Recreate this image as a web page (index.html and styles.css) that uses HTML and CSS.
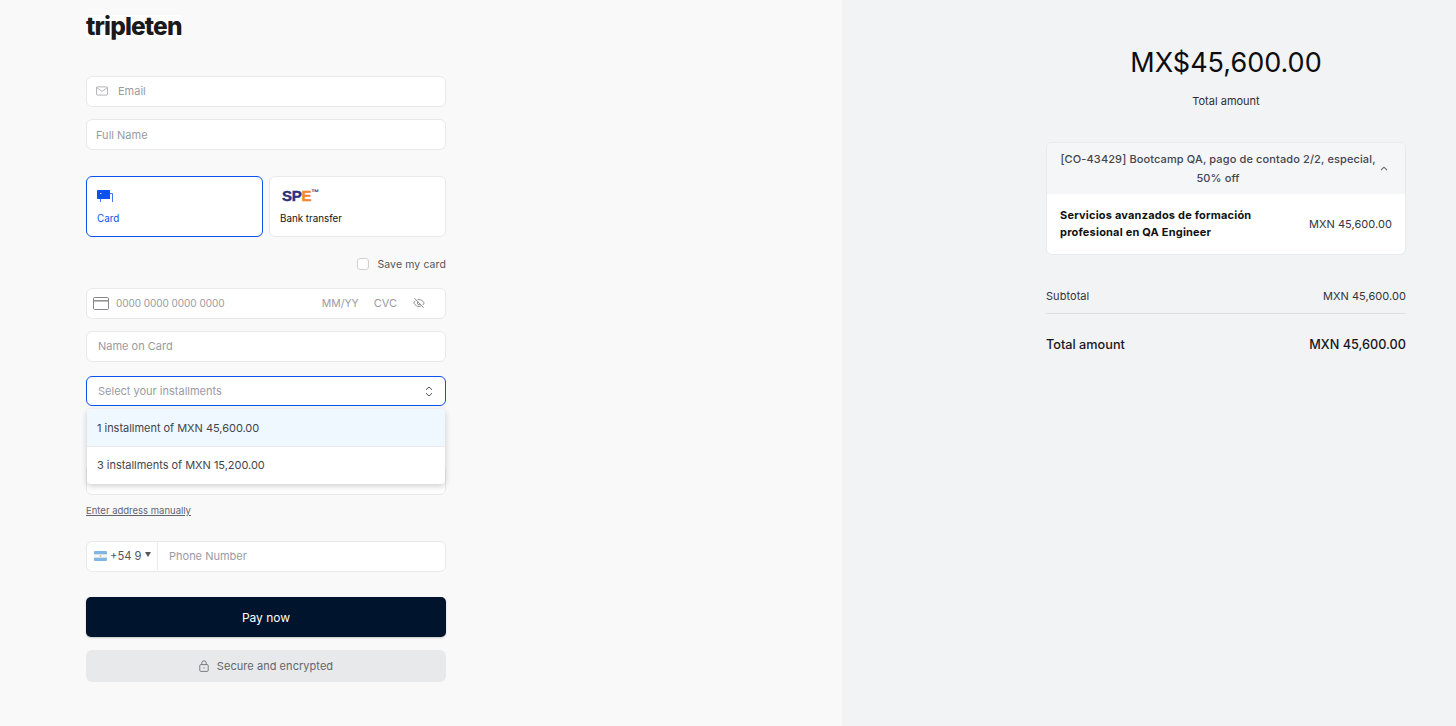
FILE: index.html
```html
<!DOCTYPE html>
<html lang="en">
<head>
    <meta charset="UTF-8">
    <meta name="viewport" content="width=device-width, initial-scale=1.0">
    <title>Checkout</title>
    <link rel="stylesheet" href="styles.css">
</head>
<body>

<div class="page">
    <!-- Payment form -->
    <main class="checkout">
        <div class="logo">tripleten</div>

        <div class="field field-email">
            <svg class="mail-icon" width="12" height="10" viewBox="0 0 12 10" fill="none" stroke="#a3a3aa" stroke-width="0.8">
                <rect x="0.5" y="0.9" width="11" height="8.2" rx="0.8"/>
                <path d="M0.7 1.6 L6 5.4 L11.3 1.6"/>
            </svg>
            <span class="placeholder">Email</span>
        </div>
        <div class="field field-name">
            <span class="placeholder">Full Name</span>
        </div>

        <div class="methods">
            <div class="method method-active">
                <svg class="method-icon" width="18" height="14" viewBox="0 0 18 14" fill="none">
                    <path d="M0 2 a1 1 0 0 1 1 -1 h12 v9 H1 a1 1 0 0 1 -1 -1 z" fill="#0b52ee"/>
                    <path d="M3.5 10 v3 M13 4.5 h2.5 v8.5" stroke="#3f78f2" stroke-width="1"/>
                    <rect x="3" y="4" width="1.4" height="1" fill="#cfe0ff"/>
                </svg>
                <span class="method-label">Card</span>
            </div>
            <div class="method">
                <div class="spei"><span class="spei-navy">SP</span><span class="spei-orange">E</span><span class="spei-mark">™</span></div>
                <span class="method-label">Bank transfer</span>
            </div>
        </div>

        <label class="save-card">
            <span class="checkbox"></span>
            <span>Save my card</span>
        </label>

        <div class="field field-card">
            <svg class="card-icon" width="16" height="13" viewBox="0 0 16 13" fill="none" stroke="#85858c" stroke-width="1">
                <rect x="0.5" y="0.5" width="15" height="12" rx="1.2"/>
                <path d="M0.5 3.8 H15.5" stroke-width="1.4"/>
            </svg>
            <span class="placeholder card-number">0000 0000 0000 0000</span>
            <span class="placeholder card-exp">MM/YY</span>
            <span class="placeholder card-cvc">CVC</span>
            <svg class="eye-icon" width="12" height="12" viewBox="0 0 12 12" fill="none" stroke="#85858c" stroke-width="0.9">
                <path d="M2.6 3.6 C1.9 4.2 1.3 5 0.8 6 C2.2 8.4 4 9.4 6 9.4 C6.9 9.4 7.7 9.2 8.5 8.8 M4.4 2.8 C4.9 2.7 5.4 2.6 6 2.6 C8 2.6 9.8 3.6 11.2 6 C10.8 6.8 10.3 7.4 9.8 8"/>
                <path d="M4.8 4.8 A1.7 1.7 0 0 0 7.2 7.2"/>
                <path d="M1.4 1.2 L10.8 10.8"/>
            </svg>
        </div>
        <div class="field field-cardname">
            <span class="placeholder">Name on Card</span>
        </div>

        <div class="select-wrap">
            <div class="field field-select">
                <span class="placeholder">Select your installments</span>
                <svg width="8" height="11" viewBox="0 0 8 11" fill="none" stroke="#55555c" stroke-width="1">
                    <path d="M1 3.8 L4 1 L7 3.8 M1 7.2 L4 10 L7 7.2"/>
                </svg>
            </div>
            <ul class="dropdown">
                <li class="option option-active">1 installment of MXN 45,600.00</li>
                <li class="option">3 installments of MXN 15,200.00</li>
            </ul>
        </div>

        <div class="field field-address"></div>
        <a class="manual-link" href="#">Enter address manually</a>

        <div class="field field-phone">
            <div class="dial">
                <svg class="flag" width="13" height="10" viewBox="0 0 13 10">
                    <rect width="13" height="10" rx="1" fill="#7fb6e4"/>
                    <rect y="3.3" width="13" height="3.4" fill="#f4f6f8"/>
                    <circle cx="6.5" cy="5" r="1" fill="#e5c66b"/>
                </svg>
                <span>+54 9</span>
                <span class="dial-arrow"></span>
            </div>
            <span class="placeholder phone-number">Phone Number</span>
        </div>

        <button class="pay-btn">Pay now</button>
        <div class="secure">
            <svg width="10" height="12" viewBox="0 0 10 12" fill="none" stroke="#6b6f76" stroke-width="0.9">
                <rect x="0.8" y="4.6" width="8.4" height="6.8" rx="1"/>
                <path d="M2.8 4.6 V3 a2.2 2.2 0 0 1 4.4 0 V4.6"/>
                <path d="M5 7.2 V8.6"/>
            </svg>
            <span>Secure and encrypted</span>
        </div>
    </main>

    <!-- Order summary -->
    <aside class="summary">
        <div class="amount">MX$45,600.00</div>
        <div class="amount-label">Total amount</div>

        <div class="order">
            <div class="order-head">
                <div class="order-title">[CO-43429] Bootcamp QA, pago de contado 2/2, especial, 50% off</div>
                <svg width="8" height="5" viewBox="0 0 8 5" fill="none" stroke="#6b6f76" stroke-width="1.1">
                    <path d="M1 4 L4 1.2 L7 4"/>
                </svg>
            </div>
            <div class="order-line">
                <div class="order-name">Servicios avanzados de formación profesional en QA Engineer</div>
                <div class="order-price">MXN 45,600.00</div>
            </div>
        </div>

        <div class="row row-sub">
            <span>Subtotal</span>
            <span>MXN 45,600.00</span>
        </div>
        <div class="row row-total">
            <span>Total amount</span>
            <span>MXN 45,600.00</span>
        </div>
    </aside>
</div>

</body>
</html>
```

FILE: styles.css
```css
* {
    box-sizing: border-box;
}
body {
    font-family: Inter, "Liberation Sans", sans-serif;
    margin: 0;
    padding: 0;
    background-color: #f9f9f9;
    color: #111;
}
.page {
    display: flex;
    height: 726px;
    overflow: hidden;
}
.checkout {
    width: 842px;
    padding: 15px 0 0 86px;
    background-color: #f9f9f9;
}
.logo {
    width: 96px;
    height: 23px;
    background-color: #fff;
    border-radius: 4px;
    font-size: 24.5px;
    font-weight: 800;
    line-height: 23px;
    letter-spacing: -0.85px;
    color: #1a1a1c;
    white-space: nowrap;
}
.field {
    display: flex;
    align-items: center;
    width: 360px;
    height: 31px;
    padding: 0 12px;
    background-color: #fff;
    border: 1px solid #e9e9ec;
    border-radius: 6px;
    font-size: 11px;
}
.placeholder {
    color: #9a9aa2;
}
.field-email {
    margin-top: 38px;
    padding-left: 9px;
    padding-bottom: 1px;
}
.mail-icon {
    margin-right: 10px;
}
.field-name {
    margin-top: 12px;
    padding-left: 9px;
}
.methods {
    display: flex;
    gap: 6px;
    width: 360px;
    margin-top: 26px;
}
.method {
    display: flex;
    flex-direction: column;
    width: 177px;
    height: 61px;
    padding: 12px 10px 0;
    background-color: #fff;
    border: 1px solid #e9e9ec;
    border-radius: 6px;
}
.method-active {
    border-color: #0b52ee;
    color: #0b52ee;
}
.method-icon {
    width: 18px;
    height: 14px;
}
.method-label {
    margin-top: 9px;
    font-size: 9.8px;
    line-height: 14px;
}
.spei {
    display: flex;
    height: 14px;
    padding-left: 2px;
    font-family: "Liberation Sans", sans-serif;
    font-size: 15px;
    font-weight: 700;
    line-height: 14px;
    letter-spacing: -0.3px;
    -webkit-text-stroke: 0.4px;
}
.spei-navy {
    color: #2b2f7f;
}
.spei-orange {
    color: #f5862a;
}
.spei-mark {
    font-size: 8px;
    line-height: 8px;
    color: #2b2f7f;
    -webkit-text-stroke: 0;
}
.save-card {
    display: flex;
    align-items: center;
    justify-content: flex-end;
    gap: 8px;
    width: 360px;
    height: 14px;
    margin-top: 20px;
    font-size: 10.5px;
    color: #55555c;
    letter-spacing: 0.1px;
}
.checkbox {
    width: 12px;
    height: 12px;
    background-color: #fff;
    border: 1px solid #cfd0d6;
    border-radius: 3px;
}
.field-card {
    margin-top: 17px;
    padding-left: 6px;
    padding-bottom: 1px;
}
.card-number {
    margin-left: 7px;
    font-size: 10px;
    letter-spacing: -0.05px;
}
.card-exp {
    margin-left: auto;
    font-size: 10.5px;
}
.card-cvc {
    margin-left: 15px;
}
.eye-icon {
    margin: 0 8px 0 16px;
}
.field-cardname {
    margin-top: 12px;
    padding-left: 11px;
    padding-bottom: 1px;
}
.select-wrap {
    position: relative;
    width: 360px;
    margin-top: 14px;
}
.field-select {
    justify-content: space-between;
    height: 30px;
    padding-left: 11px;
    padding-right: 12px;
    border-color: #0b52ee;
}
.dropdown {
    position: absolute;
    top: 33px;
    left: 1px;
    z-index: 2;
    width: 358px;
    margin: 0;
    padding: 0;
    list-style: none;
    background-color: #fff;
    border-radius: 4px;
    box-shadow: 0 2px 6px rgba(0, 0, 0, 0.2);
    overflow: hidden;
}
.option {
    height: 37px;
    padding: 0 10px;
    font-size: 11px;
    line-height: 37px;
    letter-spacing: -0.03px;
    color: #45454c;
}
.option-active {
    height: 38px;
    line-height: 39px;
    background-color: #eef8fe;
    border-bottom: 1px solid #e9e9ec;
}
.field-address {
    margin-top: 58px;
}
.manual-link {
    display: block;
    margin-top: 10px;
    font-size: 9.5px;
    line-height: 12px;
    color: #5f6470;
}
.field-phone {
    margin-top: 24px;
    padding: 0 0 1px;
}
.dial {
    display: flex;
    align-items: center;
    width: 71px;
    height: 100%;
    padding-left: 7px;
    border-right: 1px solid #e9e9ec;
    color: #55555c;
    font-size: 11.2px;
}
.flag {
    margin-right: 3px;
}
.dial-arrow {
    width: 0;
    height: 0;
    margin: -3px 0 0 3px;
    border-left: 3px solid transparent;
    border-right: 3px solid transparent;
    border-top: 5px solid #55555c;
}
.phone-number {
    margin-left: 11px;
}
.pay-btn {
    display: block;
    width: 360px;
    height: 40px;
    margin-top: 25px;
    background-color: #01142d;
    border: none;
    border-radius: 5px;
    box-shadow: 0 1px 2px rgba(0, 0, 0, 0.2);
    color: #fff;
    font-family: inherit;
    font-size: 12px;
}
.secure {
    display: flex;
    align-items: center;
    justify-content: center;
    gap: 8px;
    width: 360px;
    height: 32px;
    margin-top: 13px;
    background-color: #e8e9eb;
    border-radius: 6px;
    font-size: 11px;
    letter-spacing: 0.05px;
    color: #62666e;
}
.summary {
    flex: 1;
    padding: 45px 50px 0 204px;
    background-color: #f2f3f5;
}
.amount {
    font-size: 27px;
    line-height: 36px;
    text-align: center;
    color: #0d0d10;
}
.amount-label {
    margin-top: 13px;
    font-size: 11px;
    line-height: 14px;
    text-align: center;
    color: #2d2d32;
}
.order {
    margin-top: 34px;
    background-color: #fff;
    border: 1px solid #e9eaed;
    border-radius: 6px;
    overflow: hidden;
}
.order-head {
    display: flex;
    align-items: center;
    height: 51px;
    padding: 0 17px 0 13px;
    background-color: #f5f6f8;
    gap: 4px;
}
.order-title {
    flex: 1;
    font-size: 11px;
    font-weight: 500;
    line-height: 19px;
    letter-spacing: 0.12px;
    text-align: center;
    color: #45454c;
}
.order-line {
    display: flex;
    align-items: center;
    justify-content: space-between;
    height: 60px;
    padding: 0 13px;
}
.order-name {
    width: 205px;
    font-size: 11px;
    font-weight: 700;
    line-height: 17px;
    letter-spacing: 0.2px;
}
.order-price {
    font-size: 11px;
    letter-spacing: 0.05px;
    color: #33333a;
}
.row {
    display: flex;
    justify-content: space-between;
}
.row-sub {
    margin-top: 34px;
    padding-bottom: 10px;
    border-bottom: 1px solid #dfe0e3;
    font-size: 11px;
    line-height: 14px;
    letter-spacing: 0.05px;
    color: #33333a;
}
.row-total {
    margin-top: 23px;
    font-size: 12.7px;
    font-weight: 500;
    line-height: 16px;
    color: #17171b;
}
```
